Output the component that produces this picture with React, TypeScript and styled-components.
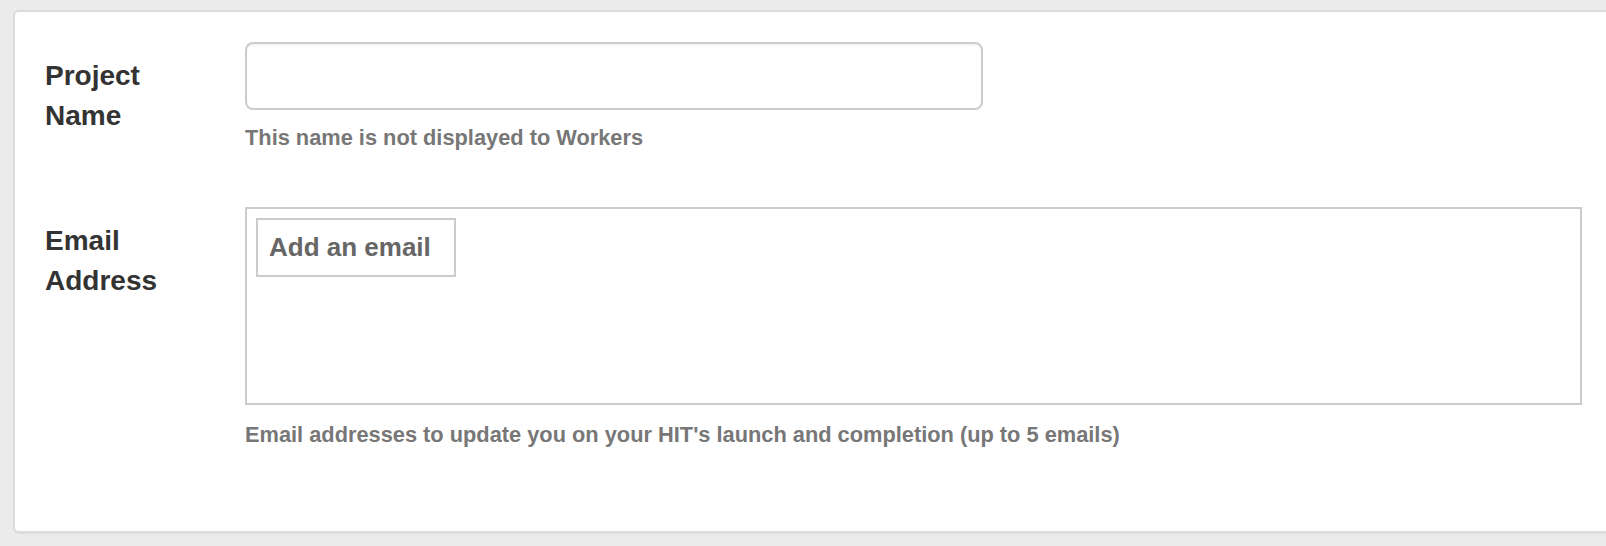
import React from "react";
import styled, { createGlobalStyle } from "styled-components";

const GlobalStyle = createGlobalStyle`
    html, body {
        margin: 0;
        padding: 0;
        background: #ebebeb;
        overflow: hidden;
    }
    body {
        font-family: "Liberation Sans", Arial, Helvetica, sans-serif;
    }
`;

const Page = styled.div`
    width: 1606px;
    height: 546px;
    padding: 10px 0 0 13px;
    box-sizing: border-box;
    overflow: hidden;
`;

const Card = styled.form`
    width: 1640px;
    box-sizing: border-box;
    background: #fff;
    border: 2px solid #dcdcdc;
    border-radius: 6px;
    box-shadow: 0 1px 1px rgba(0, 0, 0, 0.05);
    padding: 30px 0 80px 30px;
`;

const FormGroup = styled.div<{ $last?: boolean }>`
    display: flex;
    align-items: flex-start;
    margin-bottom: ${(p) => (p.$last ? "0" : "53px")};
`;

const Label = styled.label`
    width: 200px;
    flex: none;
    box-sizing: border-box;
    padding: 14px 60px 0 0;
    font-size: 28px;
    line-height: 40px;
    font-weight: 700;
    color: #333;
`;

const Field = styled.div`
    display: flex;
    flex-direction: column;
    align-items: flex-start;
`;

const TextInput = styled.input`
    width: 738px;
    height: 68px;
    box-sizing: border-box;
    border: 2px solid #cccccc;
    border-radius: 8px;
    padding: 0 20px;
    font-family: inherit;
    font-size: 28px;
    color: #555;
    background: #fff;
    outline: none;
    box-shadow: inset 0 2px 2px rgba(0, 0, 0, 0.04);
`;

const TagBox = styled.div`
    width: 1337px;
    height: 198px;
    box-sizing: border-box;
    border: 2px solid #cccccc;
    padding: 9px;
`;

const TagInput = styled.div`
    display: inline-flex;
    align-items: center;
    height: 59px;
    width: 200px;
    box-sizing: border-box;
    border: 2px solid #cccccc;
    padding: 0 11px;
    font-size: 26px;
    font-weight: 700;
    color: #666;
    white-space: nowrap;
`;

const Help = styled.p<{ $gap?: number }>`
    margin: ${(p) => p.$gap ?? 12}px 0 0;
    font-size: 21.8px;
    line-height: 32px;
    font-weight: 700;
    color: #777;
`;

const App = () => {
    return (
        <Page>
            <GlobalStyle />
            <Card>
                <FormGroup>
                    <Label>Project Name</Label>
                    <Field>
                        <TextInput type="text" />
                        <Help>This name is not displayed to Workers</Help>
                    </Field>
                </FormGroup>
                <FormGroup $last>
                    <Label>Email Address</Label>
                    <Field>
                        <TagBox>
                            <TagInput>Add an email</TagInput>
                        </TagBox>
                        <Help $gap={14}>
                            Email addresses to update you on your HIT's launch and completion (up to 5 emails)
                        </Help>
                    </Field>
                </FormGroup>
            </Card>
        </Page>
    );
};

export default App;
